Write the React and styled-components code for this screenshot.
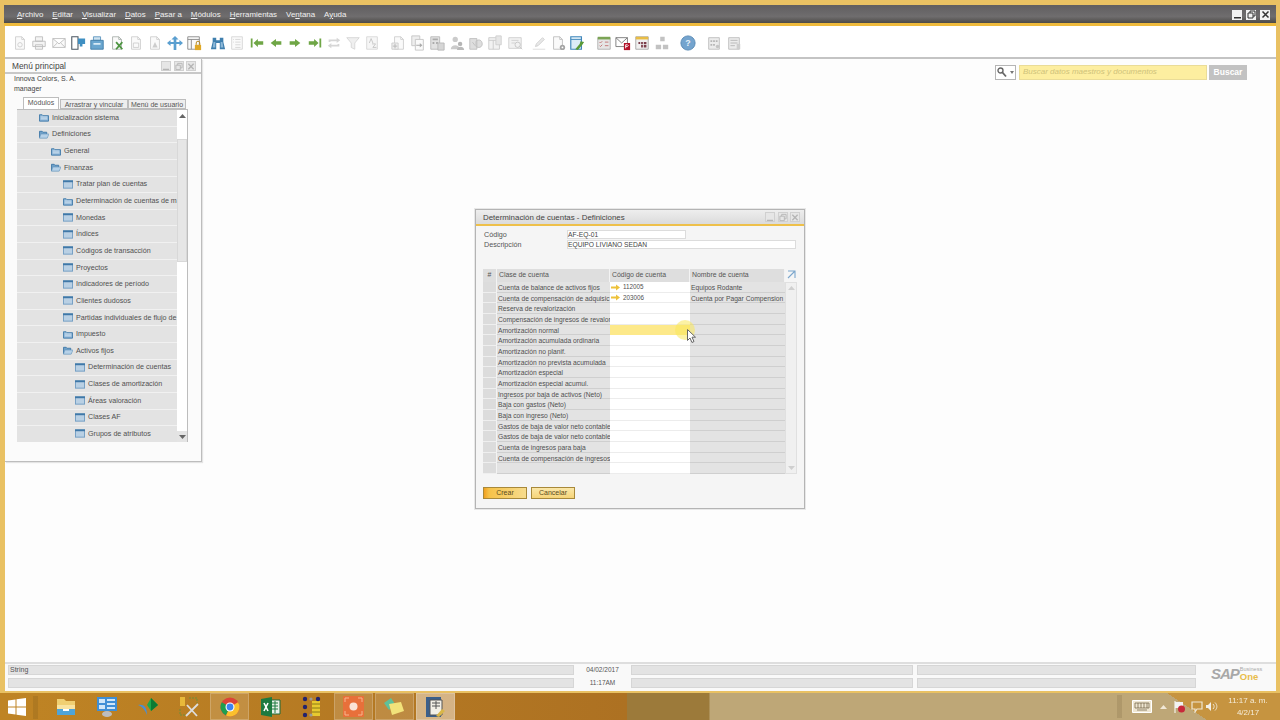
import React from 'react';
import styled, { createGlobalStyle } from 'styled-components';

const GlobalStyle = createGlobalStyle`
  html, body { margin: 0; padding: 0; width: 1280px; height: 720px; overflow: hidden; }
  body { font-family: "Liberation Sans", Arial, sans-serif; background: #fff; }
`;

const menus = [
  ['', 'A', 'rchivo'], ['', 'E', 'ditar'], ['', 'V', 'isualizar'], ['', 'D', 'atos'], ['', 'P', 'asar a'],
  ['', 'M', 'ódulos'], ['', 'H', 'erramientas'], ['Ve', 'n', 'tana'], ['A', 'y', 'uda'],
];

const G = '#cdcdcd';
const Doc = ({ c = G }) => <path d="M4 2h7l3 3v11H4z M11 2v3h3" fill="#fafafa" stroke={c} />;
const toolIcons = {
  preview: <><Doc /><circle cx="9" cy="11" r="2.5" fill="none" stroke={G} /></>,
  print: <><path d="M5 2h8v5H5z M2 7h14v6H2z M5 11h8v5H5z" fill="#f4f4f4" stroke="#bdbdbd" /></>,
  mail: <path d="M2 4h14v10H2z M2 4l7 6 7-6 M2 14l5-5 M16 14l-5-5" fill="#fafafa" stroke="#bdbdbd" />,
  device: <><path d="M2 2h7v14H2z" fill="#fff" stroke="#4a5661" strokeWidth="1.2" /><path d="M9 4h8v6h-3v3h-3v-3H9z" fill="#3f8fc2" /></>,
  fax: <><path d="M5 2h8v4H5z" fill="#cfe3f0" stroke="#5b94bd" /><path d="M2 6h14v10H2z" fill="#6aa6cf" stroke="#3f7ca6" /><path d="M5 9h8v2H5z" fill="#d8ebf6" /></>,
  excel: <><Doc c="#a8b0ac" /><path d="M8 8l7 8M15 8l-7 8" stroke="#4c9440" strokeWidth="2" /></>,
  word: <><Doc /><path d="M6 9h6v5H6z" fill="none" stroke={G} /></>,
  pdf: <><Doc /><path d="M6 14l3-6 3 6z" fill={G} /></>,
  arrows: <path d="M9 1l4 4h-2.500v3H14V5.500l4 3.500-4 3.500V10h-3.500v7H7.500v-7H4v2.500L0 9l4-3.500V8h3.500V5H5z" fill="#5a9fd0" />,
  lock: <><path d="M2 2h13v14H2z M2 5h13 M6 5v11" fill="#fafafa" stroke="#888" /><path d="M10 11h7v6h-7z" fill="#e0a826" /><path d="M11.500 11V9a2 2 0 0 1 4 0v2" fill="none" stroke="#b07f12" /></>,
  binoculars: <><path d="M3 3h4v3h4V3h4v5l2 8h-6V9H7v7H1l2-8z" fill="#3f7fae" /><path d="M4 8h2v6H3z M12 8h2l1 6h-3z" fill="#8cb8d8" /></>,
  list: <path d="M3 2h12v14H3z M7 5h6 M7 8h6 M7 11h6 M7 14h6 M4.500 5h1 M4.500 8h1" fill="#fafafa" stroke="#d5d5d5" />,
  first: <path d="M2 4h2v10H2z M5 9l5-4.500V7h6v4h-6v2.500z" fill="#6fa646" />,
  prev: <path d="M3 9l6-4.500V7h6v4H9v2.500z" fill="#6fa646" />,
  next: <path d="M15 9L9 4.500V7H3v4h6v2.500z" fill="#6fa646" />,
  last: <path d="M16 4h-2v10h2z M13 9L8 4.500V7H2v4h6v2.500z" fill="#6fa646" />,
  swap: <path d="M3 8V5h9V3l4 3-4 3V7H5v1z M15 10v3H6v2l-4-3 4-3v2h7v-1z" fill="#d6d6d6" />,
  funnel: <path d="M2 3h14l-5 6v7l-4-2V9z" fill="#efefef" stroke="#d5d5d5" />,
  sort: <><path d="M3 2h12v14H3z" fill="#f6f6f6" stroke="#d8d8d8" /><path d="M6 9l2-5 2 5 M9 10h4l-3 4h4" fill="none" stroke="#c4c4c4" /></>,
  docPlus: <><Doc /><path d="M1 9h7v7H1z" fill="#eee" stroke={G} /><path d="M4.500 10v5M2 12.500h5" stroke="#b5b5b5" /></>,
  docArrow: <><path d="M2 1h9v11H2z" fill="#eee" stroke="#c4c4c4" /><path d="M6 5h9v12H6z" fill="#fafafa" stroke="#c4c4c4" /><path d="M7 11h4V9l3 2.500-3 2.500v-2H7z" fill="#aaa" /></>,
  calc: <><path d="M2 2h10v14H2z" fill="#e2e2e2" stroke="#b8b8b8" /><path d="M4 4h6v2H4z M4 8h2v2H4z M8 8h2v2H8z" fill="#aaa" /><path d="M10 9h7v8h-7z" fill="#d6d6d6" stroke="#b8b8b8" /></>,
  people: <><circle cx="7" cy="5" r="3" fill="#cbcbcb" /><path d="M2 16c0-6 10-6 10 0z" fill="#cbcbcb" /><circle cx="12.500" cy="10" r="2.500" fill="#b5b5b5" /><path d="M9 17c0-5 8-5 8 0z" fill="#bababa" /></>,
  chart: <path d="M2 4h8v12H2z M9 7c3-3 7-1 7 3s-4 5-7 3z M5 8l3 4" fill="#dedede" stroke="#bfbfbf" />,
  sheet: <><path d="M2 3h12v13H2z M2 6h12 M7 6v10" fill="#f2f2f2" stroke="#cacaca" /><path d="M10 1h6v10h-6z" fill="#e6e6e6" stroke="#cecece" /></>,
  zoomDoc: <><path d="M2 3h14v12H2z M5 6h8 M5 9h4" fill="#f2f2f2" stroke="#cecece" /><circle cx="12" cy="11" r="3" fill="none" stroke="#c4c4c4" /><path d="M14 13l3 3" stroke="#c4c4c4" /></>,
  pen: <><path d="M2 16h14" stroke="#dcdcdc" /><path d="M5 13l1-3 7-7 2 2-7 7z" fill="#e8e8e8" stroke="#cecece" /></>,
  docGear: <><Doc c="#bdbdbd" /><circle cx="14" cy="14" r="3" fill="#a5a5a5" /><circle cx="14" cy="14" r="1" fill="#fff" /></>,
  dbTool: <><path d="M2 2h12v14H2z" fill="#dcecf7" stroke="#3f86ba" strokeWidth="1.300" /><path d="M2 5h12" stroke="#3f86ba" /><path d="M7 16l5-6 1-3 4 1-2 3-5 6z" fill="#5a9a38" /></>,
  calendar: <><path d="M2 3h14v13H2z" fill="#e6e6e6" stroke="#b0b0b0" /><path d="M2 2h14v3H2z" fill="#7ba455" /><path d="M4 8l1 1 2-2M4 12l1 1 2-2M10 8h4M10 12h4" fill="none" stroke="#c07070" /></>,
  mailAlert: <><path d="M1 3h13v10H1z M1 3l6.500 6L14 3" fill="#fff" stroke="#777" /><path d="M10 9h7v8h-7z" fill="#b3122a" /><path d="M12 15v-4h2l1 1-1 1h-2" stroke="#fff" fill="none" /></>,
  table: <><path d="M2 2h14v14H2z" fill="#f0f0f0" stroke="#a5a5a5" /><path d="M2 2h14v3H2z" fill="#e9bd45" /><path d="M5 8h2v2H5z M8 8h2v2H8z M11 8h3v2h-3z M8 11h2v3H8z M11 11h3v3h-3z" fill="#7a3d4a" /></>,
  tree: <path d="M7 2h5v5H7z M2 11h6v5H2z M10 11h6v5h-6z M9.500 7v2" fill="#c2c2c2" />,
  help: <><circle cx="9" cy="9" r="8" fill="#74a4ce" stroke="#5587b3" /><text x="9" y="12.500" fontSize="10" fontWeight="bold" fill="#e8f1f8" textAnchor="middle" fontFamily="Liberation Sans">?</text></>,
  pad: <><path d="M3 3h12v13H3z" fill="#ececec" stroke="#bdbdbd" /><path d="M5 6h2v2H5z M8 6h2v2H8z M11 6h2v2h-2z M5 10h2v2H5z M8 10h2v2H8z" fill="#b5b5b5" /><circle cx="13" cy="13" r="2" fill="#c4c4c4" /></>,
  pad2: <><path d="M3 3h12v13H3z" fill="#ececec" stroke="#bdbdbd" /><path d="M5 6h8 M5 9h8 M5 12h5" stroke="#b5b5b5" /><path d="M12 10h4v6h-4z" fill="#cecece" /></>,
};

const toolbar = [
  ['preview'], ['print'], ['mail'], ['device'], ['fax'], ['excel'], ['word'], ['pdf'], ['arrows'], ['lock'],
  ['binoculars', 5], ['list'], ['first'], ['prev'], ['next'], ['last'], ['swap'], ['funnel'], ['sort'],
  ['docPlus', 7], ['docArrow'], ['calc'], ['people'], ['chart'], ['sheet'], ['zoomDoc'],
  ['pen', 5], ['docGear'], ['dbTool'],
  ['calendar', 7], ['mailAlert'], ['table'], ['tree'],
  ['help', 7], ['pad', 7], ['pad2'],
];

const tree = [
  [0, 'closed', 'Inicialización sistema'], [0, 'open', 'Definiciones'], [1, 'closed', 'General'], [1, 'open', 'Finanzas'],
  [2, 'form', 'Tratar plan de cuentas'], [2, 'closed', 'Determinación de cuentas de m'], [2, 'form', 'Monedas'], [2, 'form', 'Índices'],
  [2, 'form', 'Códigos de transacción'], [2, 'form', 'Proyectos'], [2, 'form', 'Indicadores de período'], [2, 'form', 'Clientes dudosos'],
  [2, 'form', 'Partidas individuales de flujo de'], [2, 'closed', 'Impuesto'], [2, 'open', 'Activos fijos'],
  [3, 'form', 'Determinación de cuentas'], [3, 'form', 'Clases de amortización'], [3, 'form', 'Áreas valoración'], [3, 'form', 'Clases AF'], [3, 'form', 'Grupos de atributos'],
];

const accounts = [
  ['Cuenta de balance de activos fijos', '112005', 'Equipos Rodante'],
  ['Cuenta de compensación de adquisic', '203006', 'Cuenta por Pagar Compension'],
  ['Reserva de revalorización'], ['Compensación de ingresos de revalor'], ['Amortización normal'],
  ['Amortización acumulada ordinaria'], ['Amortización no planif.'], ['Amortización no prevista acumulada'],
  ['Amortización especial'], ['Amortización especial acumul.'], ['Ingresos por baja de activos (Neto)'],
  ['Baja con gastos (Neto)'], ['Baja con ingreso (Neto)'], ['Gastos de baja de valor neto contable'],
  ['Gastos de baja de valor neto contable'], ['Cuenta de ingresos para baja'], ['Cuenta de compensación de ingresos'], [''],
];

const TreeIcon = ({ type }) => (
  <svg width="10" height="9" viewBox="0 0 11 9">
    {type === 'form' && <><rect x=".5" y=".5" width="10" height="8" fill="#b9d0e4" stroke="#6f9cc2" /><rect x="0" y="0" width="11" height="2" fill="#3f78a8" /></>}
    {type === 'closed' && <><path d="M.5 1.500h3l1 1h6v6H.5z" fill="#8db6d8" stroke="#3f78a8" /><path d="M2 4h7M2 6h7" stroke="#d8e7f3" /></>}
    {type === 'open' && <><path d="M.5 1h3l1 1h4v6H.5z" fill="#6fa0c8" stroke="#3f78a8" /><path d="M2 4h9L9 8.500H.5z" fill="#b6d1e8" stroke="#5e90b8" strokeWidth=".6" /></>}
  </svg>
);

const WinButtons = ({ dim }) => (
  <WinCtl $dim={dim}>
    <WinBtn $dim={dim}><svg width="9" height="9" viewBox="0 0 9 9"><path d="M1 7h7v1.500H1z" fill="currentColor" /></svg></WinBtn>
    <WinBtn $dim={dim}><svg width="9" height="9" viewBox="0 0 9 9"><path d="M1 3h5v5H1z M3 3V1h5v5H6" fill="none" stroke="currentColor" /></svg></WinBtn>
    <WinBtn $dim={dim}><svg width="9" height="9" viewBox="0 0 9 9"><path d="M1.500 1.500l6 6M7.500 1.500l-6 6" stroke="currentColor" strokeWidth="1.500" /></svg></WinBtn>
  </WinCtl>
);

const Explorer = () => (
  <svg width="22" height="21" viewBox="0 0 22 21"><path d="M2 3h7l2 2h9v14H2z" fill="#f0cf72" /><path d="M2 9h18v10H2z" fill="#f9e3a0" /><path d="M2 13h18v6H2z" fill="#4ea4d8" /><path d="M8 13h6v2H8z" fill="#fff" /></svg>
);
const ControlPanel = () => (
  <svg width="22" height="21" viewBox="0 0 22 21"><path d="M1 1h20v14H1z" fill="#3f8fd6" /><path d="M3 3h6v4H3z M11 3h8v2h-8z M11 7h8v2h-8z M3 9h6v4H3z M11 11h8v2h-8z" fill="#cfe6f8" /><ellipse cx="11" cy="18" rx="5" ry="3" fill="#bdbdbd" /></svg>
);
const Crystal = () => (
  <svg width="22" height="21" viewBox="0 0 22 21"><path d="M14 2l7 7-7 6-4-6z" fill="#1ea84a" /><path d="M14 2v13l7-6z" fill="#0c7a33" /><path d="M1 9c5-1 9 1 9 10-2-5-4-8-9-10z" fill="#4a8fd6" /></svg>
);
const Tools = () => (
  <svg width="22" height="22" viewBox="0 0 22 22"><path d="M2 1h5v9H2z" fill="#e8b93a" /><path d="M8 20L20 8M9 9l10 11" stroke="#ddd" strokeWidth="1.800" /><path d="M11 2h8v5M2 13v6h5" fill="none" stroke="#6d8f3a" strokeDasharray="2 1" /></svg>
);
const Chrome = () => (
  <svg width="20" height="20" viewBox="0 0 20 20"><circle cx="10" cy="10" r="9.500" fill="#dc4437" /><path d="M10 10L1.800 5.200A9.500 9.500 0 0 0 6 18.600z" fill="#1e9e4f" /><path d="M10 10l-4 8.600A9.500 9.500 0 0 0 19.500 10 9.500 9.500 0 0 0 18 5.200z" fill="#fbc02d" /><circle cx="10" cy="10" r="4.500" fill="#fff" /><circle cx="10" cy="10" r="3.400" fill="#3f83f0" /></svg>
);
const Excel = () => (
  <svg width="20" height="20" viewBox="0 0 20 20"><path d="M9 3h10v14H9z" fill="#e8f1ea" stroke="#1c6b3a" /><path d="M11 6h6M11 9h6M11 12h6M14 4v12" stroke="#1c7a40" /><path d="M0 2l11-2v20L0 18z" fill="#1c7a40" /><path d="M3 6l4 8M7 6l-4 8" stroke="#fff" strokeWidth="1.600" /></svg>
);
const DbApp = () => (
  <svg width="22" height="22" viewBox="0 0 22 22"><path d="M11 5h8v15h-8z" fill="#e7c92f" /><path d="M11 8h8M11 12h8M11 16h8" stroke="#8a7a18" /><circle cx="4" cy="3" r="2.200" fill="#23236e" /><circle cx="17" cy="3" r="2.200" fill="#23236e" /><circle cx="4" cy="11" r="2.200" fill="#23236e" /><circle cx="4" cy="19" r="2.200" fill="#23236e" /><circle cx="10" cy="3" r="1.600" fill="#9a9a9a" /><circle cx="10" cy="19" r="1.600" fill="#9a9a9a" /></svg>
);
const Snap = () => (
  <svg width="21" height="21" viewBox="0 0 21 21"><rect width="21" height="21" fill="#e8703a" /><circle cx="10.500" cy="10.500" r="4" fill="#fbe3d4" /><path d="M2 6V2h4M15 2h4v4M19 15v4h-4M6 19H2v-4" fill="none" stroke="#f8b48e" /></svg>
);
const Notes = () => (
  <svg width="22" height="20" viewBox="0 0 22 20"><path d="M1 6l7-5 4 6-6 6z" fill="#5fc09a" /><path d="M6 7l12-2 3 9-12 4z" fill="#f2e27a" /></svg>
);
const ActiveApp = () => (
  <svg width="21" height="22" viewBox="0 0 21 22"><path d="M1 1h15v20H1z" fill="#3b5f8a" /><path d="M5 4h12v15H5z" fill="#f2efe6" stroke="#555" /><path d="M7 7h8M7 10h8M11 5v8" stroke="#555" /><path d="M11 20l6-7 3 2-6 6z" fill="#d9b648" /></svg>
);

const taskItems = [
  [Explorer], [ControlPanel], [Crystal], [Tools], [Chrome, 1], [Excel], [DbApp], [Snap, 1], [Notes, 1], [ActiveApp, 2],
];

const App = () => {
  return (
    <Screen>
      <GlobalStyle />
      <AppWindow>
        <TitleBar>
          <MenuList>
            {menus.map(([pre, key, post]) => (
              <MenuItem key={key + post}>{pre}<u>{key}</u>{post}</MenuItem>
            ))}
          </MenuList>
          <WinButtons />
        </TitleBar>
        <ToolBar>
          {toolbar.map(([name, gap]) => (
            <ToolBtn key={name} $gap={gap}>
              <svg width="16" height="16" viewBox="0 0 18 18">{toolIcons[name]}</svg>
            </ToolBtn>
          ))}
        </ToolBar>
        <Workspace>
          <SearchRow>
            <SearchPick>
              <svg width="12" height="11" viewBox="0 0 12 11"><circle cx="3.500" cy="3.500" r="2.500" fill="none" stroke="#666" strokeWidth="1.400" /><path d="M5.500 5.500l3.500 4" stroke="#666" strokeWidth="1.800" /></svg>
              <svg width="4" height="3" viewBox="0 0 4 3"><path d="M0 0h4L2 3z" fill="#777" /></svg>
            </SearchPick>
            <SearchInput>Buscar datos maestros y documentos</SearchInput>
            <SearchBtn>Buscar</SearchBtn>
          </SearchRow>

          <MainMenu>
            <MainHead>
              <span>Menú principal</span>
              <WinButtons dim />
            </MainHead>
            <Company>Innova Colors, S. A.</Company>
            <Company>manager</Company>
            <Tabs>
              <Tab $active $w={36}>Módulos</Tab>
              <Tab $w={68}>Arrastrar y vincular</Tab>
              <Tab $w={58}>Menú de usuario</Tab>
            </Tabs>
            <TreeBox>
              <TreeList>
                {tree.map(([level, type, label]) => (
                  <TreeRow key={label} $level={level}>
                    <TreeIcon type={type} />
                    <span>{label}</span>
                  </TreeRow>
                ))}
              </TreeList>
              <TreeScroll>
                <ScrollArrow>
                  <svg width="7" height="4" viewBox="0 0 7 4"><path d="M0 4l3.500-4L7 4z" fill="#666" /></svg>
                </ScrollArrow>
                <ScrollThumb />
                <ScrollArrow $filled>
                  <svg width="7" height="4" viewBox="0 0 7 4"><path d="M0 0l3.500 4L7 0z" fill="#666" /></svg>
                </ScrollArrow>
              </TreeScroll>
            </TreeBox>
          </MainMenu>

          <Dialog>
            <DialogHead>
              <span>Determinación de cuentas - Definiciones</span>
              <WinButtons dim />
            </DialogHead>
            <DialogBody>
              <FormRow>
                <FormLabel>Código</FormLabel>
                <FormField $w={119}>AF-EQ-01</FormField>
              </FormRow>
              <FormRow>
                <FormLabel>Descripción</FormLabel>
                <FormField $w={229}>EQUIPO LIVIANO SEDAN</FormField>
              </FormRow>
              <GridBox>
                <GridHead>
                  <HeadCell $center>#</HeadCell>
                  <HeadCell>Clase de cuenta</HeadCell>
                  <HeadCell>Código de cuenta</HeadCell>
                  <HeadCell>Nombre de cuenta</HeadCell>
                  <ExpandCell>
                    <svg width="9" height="9" viewBox="0 0 9 9"><path d="M1 1h7v7M8 1L1 8" fill="none" stroke="#7ba6cc" strokeWidth="1.100" /></svg>
                  </ExpandCell>
                </GridHead>
                <GridBody>
                  <GridRows>
                    {accounts.map(([name, code, title], i) => (
                      <GridRow key={i}>
                        <RowNum />
                        <ClassCell>{name}</ClassCell>
                        <CodeCell $selected={i === 4}>
                          {code && (
                            <svg width="9" height="7" viewBox="0 0 9 7"><path d="M0 2.500h5V.5L9 3.500 5 6.500v-2H0z" fill="#eec23a" /></svg>
                          )}
                          {code}
                        </CodeCell>
                        <NameCell>{title}</NameCell>
                      </GridRow>
                    ))}
                  </GridRows>
                  <GridScroll>
                    <svg width="7" height="4" viewBox="0 0 7 4"><path d="M0 4l3.500-4L7 4z" fill="#cfcfcf" /></svg>
                    <svg width="7" height="4" viewBox="0 0 7 4"><path d="M0 0l3.500 4L7 0z" fill="#cfcfcf" /></svg>
                  </GridScroll>
                </GridBody>
              </GridBox>
              <Buttons>
                <ActionBtn $primary>Crear</ActionBtn>
                <ActionBtn>Cancelar</ActionBtn>
              </Buttons>
            </DialogBody>
            <CursorHalo />
            <Cursor width="9" height="14" viewBox="0 0 9 14">
              <path d="M.5.5v11l2.500-2.500 2 4.500 2-1-2-4.300h3.500z" fill="#fff" stroke="#666" />
            </Cursor>
          </Dialog>
        </Workspace>
        <StatusBar>
          <StatusField>String</StatusField>
          <StatusDate>04/02/2017</StatusDate>
          <StatusField />
          <StatusField $offset />
          <SapLogo>
            <SapMark>SAP</SapMark>
            <SapWords>
              <SapBusiness>Business</SapBusiness>
              <SapOne>One</SapOne>
            </SapWords>
          </SapLogo>
          <StatusField />
          <StatusDate>11:17AM</StatusDate>
          <StatusField />
          <StatusField $offset />
        </StatusBar>
      </AppWindow>
      <TaskBar>
        <StartBtn>
          <svg width="18" height="18" viewBox="0 0 18 18"><path d="M0 2.500l7.500-1v7H0z M8.500 1.300L18 0v8.500H8.500z M0 9.500h7.500v7l-7.500-1z M8.500 9.500H18V18l-9.500-1.300z" fill="#fff" /></svg>
        </StartBtn>
        <Grip />
        {taskItems.map(([Icon, level], i) => (
          <TaskItem key={i} $level={level}><Icon /></TaskItem>
        ))}
        <Tray>
          <Grip />
          <TrayIcon $w={28}>
            <svg width="20" height="13" viewBox="0 0 20 13"><path d="M.5.500h19v12H.5z" fill="#efe6d2" stroke="#fff" /><path d="M3 3h14v5H3z M6 3v5M9 3v5M12 3v5M15 3v5M5 10h10" fill="none" stroke="#6b5a3c" strokeWidth=".7" /></svg>
          </TrayIcon>
          <TrayIcon $w={15}>
            <svg width="7" height="4" viewBox="0 0 7 4"><path d="M0 4l3.500-4L7 4z" fill="#f1e8d6" /></svg>
          </TrayIcon>
          <TrayIcon $w={17}>
            <svg width="11" height="12" viewBox="0 0 11 12"><path d="M1 0v12" stroke="#fff" /><path d="M1 1h8v6H1z" fill="#f2f2f2" /><circle cx="7.500" cy="8" r="3.500" fill="#c8283a" /></svg>
          </TrayIcon>
          <TrayIcon $w={17}>
            <svg width="12" height="12" viewBox="0 0 12 12"><path d="M1 1h10v7H6l-2 3V8H1z" fill="none" stroke="#efe6d2" strokeWidth="1.200" /></svg>
          </TrayIcon>
          <TrayIcon $w={14}>
            <svg width="12" height="11" viewBox="0 0 12 11"><path d="M0 4h2l3-3v9L2 7H0z" fill="#f2efe8" /><path d="M7 3c1.500 1.500 1.500 3.500 0 5M9 1.500c2.500 2.500 2.500 5.500 0 8" fill="none" stroke="#efe6d2" /></svg>
          </TrayIcon>
          <Clock>
            <span>11:17 a. m.</span>
            <span>4/2/17</span>
          </Clock>
        </Tray>
      </TaskBar>
    </Screen>
  );
};

export default App;

const Screen = styled.div`
  width: 1280px;
  height: 720px;
  display: flex;
  flex-direction: column;
  overflow: hidden;
  filter: blur(0.35px);
`;

const AppWindow = styled.div`
  height: 693px;
  box-sizing: border-box;
  display: flex;
  flex-direction: column;
  padding: 5px 4px 2px 5px;
  background: #e9c163;
`;

const TitleBar = styled.div`
  height: 21px;
  flex: none;
  box-sizing: border-box;
  margin-left: -1px;
  padding: 1px 6px 3px 13px;
  display: flex;
  align-items: center;
  justify-content: space-between;
  background: linear-gradient(#605e60 0, #6f6d6e 55%, #4d4b48 85.700%, #eeba3c 85.700%);
`;

const MenuList = styled.div`
  display: flex;
  gap: 9px;
`;

const MenuItem = styled.span`
  color: #f0f0f0;
  font-size: 7.900px;
  line-height: 12px;
  u { text-underline-offset: 1px; text-decoration-thickness: 0.7px; }
`;

const WinCtl = styled.div`
  display: flex;
  gap: ${(p) => (p.$dim ? '2.500px' : '4px')};
  align-items: center;
`;

const WinBtn = styled.div`
  width: 10px;
  height: 10px;
  display: flex;
  align-items: center;
  justify-content: center;
  background: ${(p) => (p.$dim ? '#e6e6e6' : '#f2f2f2')};
  color: ${(p) => (p.$dim ? '#b5b5b5' : '#333')};
  border: ${(p) => (p.$dim ? '1px solid #d0d0d0' : 'none')};
  box-sizing: border-box;
`;

const ToolBar = styled.div`
  height: 33px;
  flex: none;
  box-sizing: border-box;
  padding: 3px 0 0 5.500px;
  display: flex;
  align-items: center;
  background: #fff;
  border-bottom: 2px solid #c4c4c4;
`;

const ToolBtn = styled.div`
  width: 19.300px;
  flex: none;
  display: flex;
  justify-content: center;
  margin-left: ${(p) => p.$gap || 0}px;
`;

const Workspace = styled.div`
  flex: 1;
  position: relative;
  background: #fdfdfd;
`;

const SearchRow = styled.div`
  display: flex;
  justify-content: flex-end;
  align-items: stretch;
  height: 15px;
  padding: 6px 29px 0 0;
  gap: 2px;
`;

const SearchPick = styled.div`
  width: 21px;
  box-sizing: border-box;
  margin-right: 1px;
  display: flex;
  align-items: center;
  justify-content: center;
  gap: 1px;
  background: #fff;
  border: 1px solid #b5b5b5;
`;

const SearchInput = styled.div`
  width: 188px;
  box-sizing: border-box;
  padding-left: 3px;
  background: #fdeea0;
  border: 1px solid #eadc98;
  color: #cfc27a;
  font-size: 8px;
  font-style: italic;
  line-height: 12px;
`;

const SearchBtn = styled.div`
  width: 38px;
  background: #c2c2c2;
  color: #fff;
  font-size: 8.500px;
  font-weight: bold;
  line-height: 15px;
  text-align: center;
`;

const MainMenu = styled.div`
  position: absolute;
  left: 0;
  top: 0;
  width: 197px;
  height: 403px;
  box-sizing: border-box;
  background: #fbfbfb;
  border-right: 1px solid #bdbdbd;
  border-bottom: 1px solid #bdbdbd;
  box-shadow: 1px 1px 1px #e4e4e4;
`;

const MainHead = styled.div`
  height: 12px;
  padding: 1px 5px 0 7px;
  display: flex;
  justify-content: space-between;
  align-items: center;
  border-bottom: 2px solid #c8c8c8;
  font-size: 8.300px;
  color: #444;
`;

const Company = styled.div`
  height: 10px;
  padding-left: 9px;
  font-size: 7px;
  line-height: 10px;
  color: #444;
`;

const Tabs = styled.div`
  display: flex;
  align-items: flex-end;
  height: 12px;
  margin: 3px 0 0 18px;
`;

const Tab = styled.div`
  width: ${(p) => p.$w}px;
  height: ${(p) => (p.$active ? 12 : 10)}px;
  flex: none;
  box-sizing: border-box;
  text-align: center;
  font-size: 7px;
  line-height: 9px;
  color: #555;
  background: ${(p) => (p.$active ? '#fff' : '#eeeeee')};
  border: 1px solid #bdbdbd;
  border-bottom: ${(p) => (p.$active ? 'none' : '1px solid #bdbdbd')};
  margin-right: ${(p) => (p.$active ? 1 : 0)}px;
`;

const TreeBox = styled.div`
  display: flex;
  width: 171px;
  height: 333px;
  margin-left: 12px;
  box-sizing: border-box;
  border-top: 1px solid #bdbdbd;
`;

const TreeList = styled.div`
  width: 160px;
  flex: none;
  overflow: hidden;
`;

const TreeRow = styled.div`
  height: 16.650px;
  box-sizing: border-box;
  padding-left: ${(p) => 22 + p.$level * 12}px;
  display: flex;
  align-items: center;
  gap: 3px;
  background: #e3e3e3;
  border-bottom: 1px solid #f1f1f1;
  font-size: 7.150px;
  color: #505050;
  white-space: nowrap;
  svg { flex: none; }
`;

const TreeScroll = styled.div`
  width: 11px;
  display: flex;
  flex-direction: column;
  box-sizing: border-box;
  border-right: 1px solid #bdbdbd;
  background: #fff;
`;

const ScrollArrow = styled.div`
  height: 11px;
  flex: none;
  display: flex;
  align-items: center;
  justify-content: center;
  background: ${(p) => (p.$filled ? '#e4e4e4' : '#fff')};
  margin-top: ${(p) => (p.$filled ? 'auto' : 0)};
`;

const ScrollThumb = styled.div`
  height: 121px;
  margin-top: 18px;
  background: #e6e6e6;
  border: 1px solid #d8d8d8;
`;

const Dialog = styled.div`
  position: absolute;
  left: 470px;
  top: 150px;
  width: 330px;
  height: 300px;
  box-sizing: border-box;
  background: #f5f5f5;
  border: 1px solid #b4b4b4;
  box-shadow: 0 0 0 1px #e8e8e8;
`;

const DialogHead = styled.div`
  height: 14px;
  padding: 0 4px 0 7px;
  display: flex;
  align-items: center;
  justify-content: space-between;
  background: linear-gradient(#eeeeee, #dbdbdb);
  border-bottom: 2px solid #eec04a;
  font-size: 7.900px;
  color: #444;
`;

const DialogBody = styled.div`
  padding: 3px 8px 0 7px;
`;

const FormRow = styled.div`
  display: flex;
  align-items: center;
  height: 10px;
`;

const FormLabel = styled.div`
  width: 84px;
  flex: none;
  padding-left: 1px;
  box-sizing: border-box;
  font-size: 7.200px;
  color: #555;
`;

const FormField = styled.div`
  width: ${(p) => p.$w}px;
  height: 9px;
  box-sizing: border-box;
  background: #fff;
  border: 1px solid #dcdcdc;
  font-size: 6.700px;
  line-height: 7px;
  color: #444;
`;

const GridBox = styled.div`
  margin-top: 20px;
  width: 314px;
`;

const GridHead = styled.div`
  display: grid;
  grid-template-columns: 14px 113px 80px 95px 12px;
  height: 13px;
  background: #dedede;
`;

const HeadCell = styled.div`
  padding-left: ${(p) => (p.$center ? 0 : 2)}px;
  text-align: ${(p) => (p.$center ? 'center' : 'left')};
  font-size: 6.900px;
  line-height: 12px;
  color: #555;
  border-right: 1px solid #f3f3f3;
`;

const ExpandCell = styled.div`
  background: #f5f5f5;
  display: flex;
  justify-content: center;
  padding-top: 1px;
`;

const GridBody = styled.div`
  display: flex;
`;

const GridRows = styled.div`
  width: 302px;
  flex: none;
`;

const GridRow = styled.div`
  display: grid;
  grid-template-columns: 14px 113px 80px 95px;
  grid-template-rows: 10.670px;
  height: 10.670px;
  font-size: 6.700px;
  line-height: 12px;
  color: #4f4f4f;
`;

const RowNum = styled.div`
  background: #dcdcdc;
  border-bottom: 1px solid #efefef;
  border-right: 1px solid #f3f3f3;
`;

const ClassCell = styled.div`
  height: 10.670px;
  box-sizing: border-box;
  padding-left: 1px;
  background: #e3e3e3;
  border-bottom: 1px solid #cfcfcf;
  white-space: nowrap;
`;

const CodeCell = styled.div`
  height: 10.670px;
  box-sizing: border-box;
  display: flex;
  align-items: center;
  gap: 3px;
  padding: 1px 0 0 1px;
  background: ${(p) => (p.$selected ? '#fde98a' : '#fff')};
  border-bottom: 1px solid ${(p) => (p.$selected ? '#fde98a' : '#ececec')};
  font-size: 6.300px;
`;

const NameCell = styled.div`
  height: 10.670px;
  box-sizing: border-box;
  padding-left: 1px;
  background: #e3e3e3;
  border-bottom: 1px solid #cfcfcf;
  white-space: nowrap;
`;

const GridScroll = styled.div`
  width: 12px;
  box-sizing: border-box;
  padding: 3px 0;
  display: flex;
  flex-direction: column;
  align-items: center;
  justify-content: space-between;
  background: #f0f0f0;
  border: 1px solid #e0e0e0;
`;

const Buttons = styled.div`
  display: flex;
  gap: 4px;
  margin-top: 13px;
`;

const ActionBtn = styled.div`
  width: 44px;
  height: 12px;
  box-sizing: border-box;
  text-align: center;
  font-size: 7px;
  line-height: 10px;
  color: #5a4a20;
  border: 1px solid #a8893a;
  background: ${(p) => (p.$primary
    ? 'linear-gradient(90deg, #f0a020 0, #f6c248 12%, #f7dc8e 100%)'
    : 'linear-gradient(#fbe7a8, #f6d478)')};
`;

const CursorHalo = styled.div`
  position: absolute;
  left: 199px;
  top: 110px;
  width: 20px;
  height: 20px;
  border-radius: 50%;
  background: rgba(250, 232, 90, 0.55);
`;

const Cursor = styled.svg`
  position: absolute;
  left: 211px;
  top: 119px;
`;

const StatusBar = styled.div`
  height: 29px;
  flex: none;
  box-sizing: border-box;
  padding: 1px 0 0 3px;
  display: grid;
  grid-template-columns: 566px 57px 282px 283px 1fr;
  grid-template-rows: 10px 10px;
  row-gap: 3px;
  background: #f9f9f9;
  border-top: 2px solid #dedede;
`;

const StatusField = styled.div`
  margin-left: ${(p) => (p.$offset ? 4 : 0)}px;
  padding-left: 1px;
  background: #e3e3e3;
  border: 1px solid #d6d6d6;
  font-size: 7px;
  line-height: 8px;
  color: #555;
`;

const StatusDate = styled.div`
  text-align: center;
  font-size: 6.500px;
  line-height: 10px;
  color: #555;
`;

const SapLogo = styled.div`
  grid-column: 5;
  grid-row: 1 / span 2;
  display: flex;
  align-items: flex-start;
  gap: 1px;
  padding-left: 15px;
`;

const SapMark = styled.span`
  font-size: 15px;
  line-height: 18px;
  font-weight: bold;
  font-style: italic;
  letter-spacing: -1px;
  color: #a8a8a8;
`;

const SapWords = styled.div`
  display: flex;
  flex-direction: column;
  align-items: flex-start;
  padding-top: 2px;
`;

const SapBusiness = styled.span`
  font-size: 5.500px;
  line-height: 5px;
  color: #aaa;
`;

const SapOne = styled.span`
  font-size: 9.500px;
  line-height: 10px;
  font-weight: bold;
  color: #e8bd4a;
`;

const TaskBar = styled.div`
  height: 27px;
  flex: none;
  display: flex;
  align-items: stretch;
  background:
    linear-gradient(34deg, transparent 675px, #c69440 675px),
    linear-gradient(90deg, #bf8424 0, #ad7122 627px, #9c7a3a 627px, #9c7a3a 709px, #bea777 710px, #bea777 100%);
`;

const StartBtn = styled.div`
  width: 33px;
  flex: none;
  display: flex;
  align-items: center;
  justify-content: center;
  padding-left: 1px;
  box-sizing: border-box;
`;

const Grip = styled.div`
  width: 5px;
  flex: none;
  margin: 3px 7px 1px 0;
  background: radial-gradient(circle, rgba(70, 50, 20, 0.4) 0.5px, transparent 0.8px) 0 0 / 2px 2px;
`;

const TaskItem = styled.div`
  width: 39.100px;
  flex: none;
  margin: 0 1px;
  display: flex;
  align-items: center;
  justify-content: center;
  background: ${(p) => (p.$level === 2 ? 'rgba(255,255,255,0.45)' : p.$level ? 'rgba(255,255,255,0.14)' : 'transparent')};
  box-shadow: ${(p) => (p.$level ? 'inset 0 0 0 1px rgba(255,255,255,0.2)' : 'none')};
`;

const Tray = styled.div`
  margin-left: auto;
  display: flex;
  align-items: center;
  padding-right: 8px;
  ${Grip} { height: 23px; margin: 0 6px 0 0; }
`;

const TrayIcon = styled.div`
  width: ${(p) => p.$w}px;
  flex: none;
  display: flex;
  justify-content: center;
`;

const Clock = styled.div`
  width: 48px;
  margin-left: 5px;
  display: flex;
  flex-direction: column;
  align-items: center;
  font-size: 8px;
  line-height: 12px;
  color: #f5ecd8;
`;
